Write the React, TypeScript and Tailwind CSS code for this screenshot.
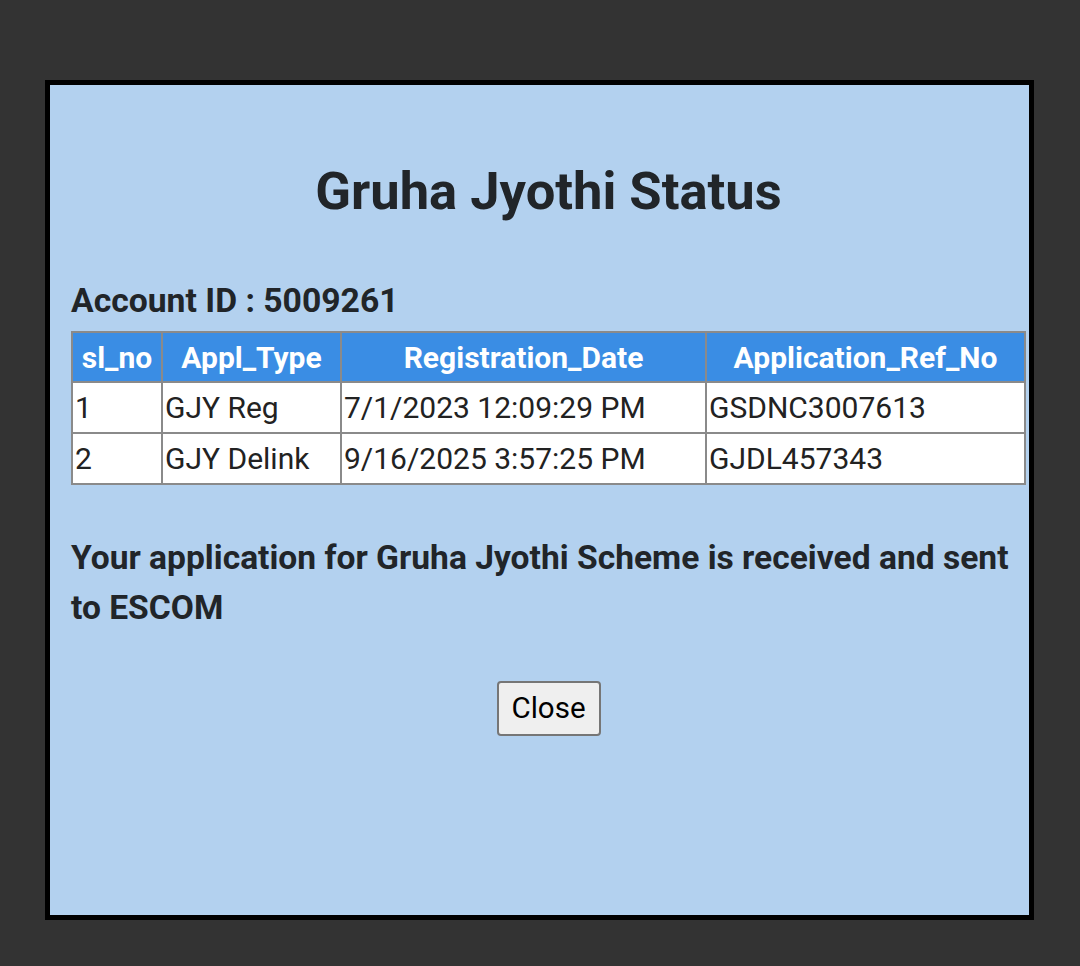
export default function App() {
  return (
    <div className="h-[966px] w-[1080px] bg-[#333333] pl-[45px] pt-[80px] font-['Roboto',sans-serif]">
      <div className="h-[840px] w-[989px] border-[5px] border-black bg-[#b3d1ef] pl-[21px] pr-[3px] text-[#212529]">
        <h1 className="mt-[74px] text-center text-[52.5px] font-bold leading-[64px]">Gruha Jyothi Status</h1>

        <div className="mt-[58px] text-[33.7px] font-bold leading-[40px]">Account ID : 5009261</div>

        <table className="mt-[10px] w-full border-collapse text-[30px] text-[#222]">
          <thead>
            <tr className="h-[50px] bg-[#3a8de4] text-white">
              <th className="w-[90px] border-2 border-[#8a8a8a] font-bold">sl_no</th>
              <th className="w-[179px] border-2 border-[#8a8a8a] font-bold">Appl_Type</th>
              <th className="w-[365px] border-2 border-[#8a8a8a] font-bold">Registration_Date</th>
              <th className="border-2 border-[#8a8a8a] font-bold">Application_Ref_No</th>
            </tr>
          </thead>
          <tbody className="bg-white">
            <tr className="h-[51px]">
              <td className="border-2 border-[#8a8a8a] pl-[2px]">1</td>
              <td className="border-2 border-[#8a8a8a] pl-[2px]">GJY Reg</td>
              <td className="border-2 border-[#8a8a8a] pl-[2px]">7/1/2023 12:09:29 PM</td>
              <td className="border-2 border-[#8a8a8a] pl-[2px]">GSDNC3007613</td>
            </tr>
            <tr className="h-[51px]">
              <td className="border-2 border-[#8a8a8a] pl-[2px]">2</td>
              <td className="border-2 border-[#8a8a8a] pl-[2px]">GJY Delink</td>
              <td className="border-2 border-[#8a8a8a] pl-[2px]">9/16/2025 3:57:25 PM</td>
              <td className="border-2 border-[#8a8a8a] pl-[2px]">GJDL457343</td>
            </tr>
          </tbody>
        </table>

        <p className="mt-[48px] text-[33.6px] font-bold leading-[50px]">
          Your application for Gruha Jyothi Scheme is received and sent to ESCOM
        </p>

        <div className="mt-[48px] flex justify-center">
          <button className="h-[55px] w-[104px] rounded-[4px] border-2 border-[#767676] bg-[#efefef] text-[29.5px] text-black">
            Close
          </button>
        </div>
      </div>
    </div>
  );
}
